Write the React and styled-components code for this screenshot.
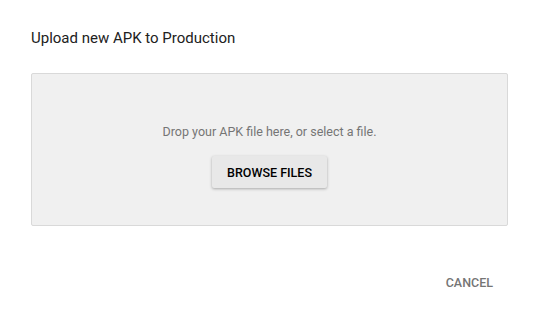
import styled, { createGlobalStyle } from "styled-components";

const GlobalStyle = createGlobalStyle`
  body {
    margin: 0;
    background: #ffffff;
    font-family: Roboto, "Liberation Sans", sans-serif;
  }
`;

const Dialog = styled.div`
  width: 537px;
  height: 322px;
  box-sizing: border-box;
  padding: 28px 29px 0 31px;
  display: flex;
  flex-direction: column;
`;

const Title = styled.h2`
  margin: 0;
  font-size: 15px;
  line-height: 20px;
  font-weight: 400;
  color: #212121;
`;

const DropZone = styled.div`
  margin-top: 25px;
  height: 153px;
  box-sizing: border-box;
  background: #f0f0f0;
  border: 1px solid #d9d9d9;
  border-radius: 2px;
  display: flex;
  flex-direction: column;
  align-items: center;
  padding-top: 49px;
`;

const Hint = styled.p`
  margin: 0;
  font-size: 12.5px;
  line-height: 18px;
  color: #757575;
`;

const Browse = styled.button`
  margin-top: 15px;
  width: 115px;
  height: 32px;
  border: none;
  border-radius: 2px;
  background: #e8e8e8;
  box-shadow: 0 1px 3px rgba(0, 0, 0, 0.3);
  font-family: inherit;
  font-size: 12.5px;
  font-weight: 500;
  color: #000000;
  cursor: pointer;
`;

const Actions = styled.div`
  margin-top: 41px;
  display: flex;
  justify-content: flex-end;
  padding-right: 7px;
`;

const TextButton = styled.button`
  background: none;
  border: none;
  padding: 8px 8px;
  font-family: inherit;
  font-size: 12.5px;
  font-weight: 500;
  color: #757575;
  cursor: pointer;
`;

export default function App() {
  return (
    <>
      <GlobalStyle />
      <Dialog>
        <Title>Upload new APK to Production</Title>
        <DropZone>
          <Hint>Drop your APK file here, or select a file.</Hint>
          <Browse>BROWSE FILES</Browse>
        </DropZone>
        <Actions>
          <TextButton>CANCEL</TextButton>
        </Actions>
      </Dialog>
    </>
  );
}
